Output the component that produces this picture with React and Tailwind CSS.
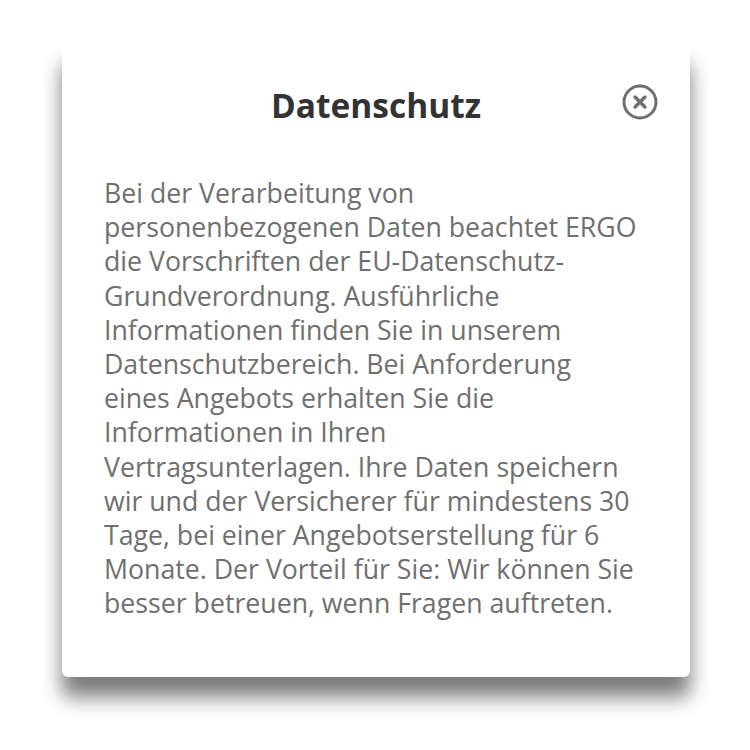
import React from "react";

const lines = [
  "Bei der Verarbeitung von",
  "personenbezogenen Daten beachtet ERGO",
  "die Vorschriften der EU-Datenschutz-",
  "Grundverordnung. Ausführliche",
  "Informationen finden Sie in unserem",
  "Datenschutzbereich. Bei Anforderung",
  "eines Angebots erhalten Sie die",
  "Informationen in Ihren",
  "Vertragsunterlagen. Ihre Daten speichern",
  "wir und der Versicherer für mindestens 30",
  "Tage, bei einer Angebotserstellung für 6",
  "Monate. Der Vorteil für Sie: Wir können Sie",
  "besser betreuen, wenn Fragen auftreten.",
];

// close icon: circle with a small cross
const CloseIcon = () => (
  <svg width="36" height="36" viewBox="0 0 36 36" fill="none">
    <circle cx="18" cy="18" r="16" stroke="#6e6e6e" strokeWidth="3" />
    <path d="M13 13L23 23M23 13L13 23" stroke="#6e6e6e" strokeWidth="3.2" strokeLinecap="round" />
  </svg>
);

const App = () => {
  return (
    <div className="w-[750px] h-[750px] bg-white overflow-hidden" style={{ fontFamily: "'Open Sans', sans-serif" }}>
      <div className="ml-[62px] mt-[45px] w-[628px] h-[632px] bg-white rounded-[6px] shadow-[0_20px_20px_rgba(0,0,0,0.52)] flex flex-col">
        <div className="relative flex justify-center pt-[36px]">
          <h2 className="text-[33.5px] leading-[48px] font-bold text-[#333333]">Datenschutz</h2>
          <button className="absolute right-[32px] top-[39px]">
            <CloseIcon />
          </button>
        </div>
        <p className="mt-[47px] pl-[42px] text-[26.7px] leading-[34.2px] text-[#6f6f6f] whitespace-nowrap">
          {lines.map((l) => (
            <span key={l} className="block">{l}</span>
          ))}
        </p>
      </div>
    </div>
  );
};

export default App;
